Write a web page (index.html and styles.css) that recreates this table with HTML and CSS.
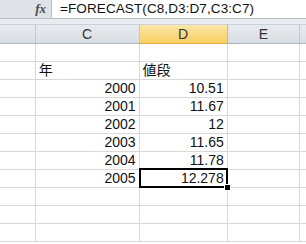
FILE: index.html
```html
<!DOCTYPE html>
<html>
<head>
	<meta charset="UTF-8">
	<title>FORECAST</title>
	<link rel="stylesheet" href="styles.css">
</head>
<body>
	<div class="formula-bar">
		<div class="fx">fx</div>
		<div class="formula">=FORECAST(C8,D3:D7,C3:C7)</div>
	</div>
	<div class="band"></div>

	<div class="sheet">
		<div class="row head">
			<div class="cell b"></div>
			<div class="cell c">C</div>
			<div class="cell d active">D</div>
			<div class="cell e">E</div>
			<div class="cell f"></div>
		</div>
		<div class="row">
			<div class="cell b"></div><div class="cell c"></div><div class="cell d"></div><div class="cell e"></div><div class="cell f"></div>
		</div>
		<div class="row">
			<div class="cell b"></div><div class="cell c">年</div><div class="cell d">値段</div><div class="cell e"></div><div class="cell f"></div>
		</div>
		<div class="row">
			<div class="cell b"></div><div class="cell c num">2000</div><div class="cell d num">10.51</div><div class="cell e"></div><div class="cell f"></div>
		</div>
		<div class="row">
			<div class="cell b"></div><div class="cell c num">2001</div><div class="cell d num">11.67</div><div class="cell e"></div><div class="cell f"></div>
		</div>
		<div class="row">
			<div class="cell b"></div><div class="cell c num">2002</div><div class="cell d num">12</div><div class="cell e"></div><div class="cell f"></div>
		</div>
		<div class="row">
			<div class="cell b"></div><div class="cell c num">2003</div><div class="cell d num">11.65</div><div class="cell e"></div><div class="cell f"></div>
		</div>
		<div class="row">
			<div class="cell b"></div><div class="cell c num">2004</div><div class="cell d num">11.78</div><div class="cell e"></div><div class="cell f"></div>
		</div>
		<div class="row">
			<div class="cell b"></div><div class="cell c num">2005</div><div class="cell d num selected">12.278</div><div class="cell e"></div><div class="cell f"></div>
		</div>
		<div class="row">
			<div class="cell b"></div><div class="cell c"></div><div class="cell d"></div><div class="cell e"></div><div class="cell f"></div>
		</div>
		<div class="row">
			<div class="cell b"></div><div class="cell c"></div><div class="cell d"></div><div class="cell e"></div><div class="cell f"></div>
		</div>
		<div class="row">
			<div class="cell b"></div><div class="cell c"></div><div class="cell d"></div><div class="cell e"></div><div class="cell f"></div>
		</div>
	</div>
</body>
</html>
```

FILE: styles.css
```css
html {
	overflow: hidden;
}

body {
	margin: 0;
	width: 306px;
	height: 244px;
	overflow: hidden;
	background-color: #fff;
	font-family: 'Liberation Sans', 'Noto Sans CJK JP', sans-serif;
	color: #111;
}

/* formula bar */
.formula-bar {
	display: flex;
	height: 19px;
	background-color: #dfe3e8;
	border-bottom: 1px solid #b9bec6;
	box-sizing: border-box;
}

.fx {
	width: 52px;
	box-sizing: border-box;
	padding-right: 5px;
	text-align: right;
	font-family: 'Liberation Serif', serif;
	font-style: italic;
	font-weight: bold;
	font-size: 13px;
	line-height: 18px;
	color: #4a4a4a;
	border-right: 1px solid #b9bec6;
}

.formula {
	flex: 1;
	background-color: #fff;
	padding-left: 8px;
	font-size: 13.5px;
	letter-spacing: 0.1px;
	line-height: 18px;
}

.band {
	height: 5px;
	background-color: #e9ecf0;
	border-bottom: 1px solid #ccd1d8;
}

/* grid */
.row {
	display: flex;
	height: 18px;
	border-bottom: 1px solid #d8d8d8;
	box-sizing: border-box;
	font-size: 14px;
	line-height: 17px;
}

.cell {
	border-right: 1px solid #d8d8d8;
	padding: 0 3px;
	white-space: nowrap;
	position: relative;
	box-sizing: border-box;
}

.cell.b { width: 36px; padding: 0; }
.cell.c { width: 105px; }
.cell.d { width: 89px; }
.cell.e { width: 73px; }
.cell.f { flex: 1; border-right: none; }

.num {
	text-align: right;
}

.head {
	height: 19px;
	line-height: 18px;
	background: linear-gradient(#e7eaee, #dadee4);
	border-bottom: 1px solid #aeb4bc;
	color: #333;
	text-align: center;
}

.head .cell {
	border-right-color: #c2c8d0;
}

.head .active {
	background: linear-gradient(#fce7a8, #f6cf62);
	border-bottom: 1px solid #e8a947;
	margin-bottom: -1px;
	border-right-color: #e8b55a;
}

/* active cell outline and fill handle */
.selected::after {
	content: '';
	position: absolute;
	top: -2px;
	left: -1px;
	right: -1px;
	bottom: -1px;
	border: 2px solid #000;
	pointer-events: none;
}

.selected::before {
	content: '';
	position: absolute;
	right: -4px;
	bottom: -4px;
	width: 5px;
	height: 5px;
	background-color: #000;
	border: 1px solid #fff;
	z-index: 1;
}
```
